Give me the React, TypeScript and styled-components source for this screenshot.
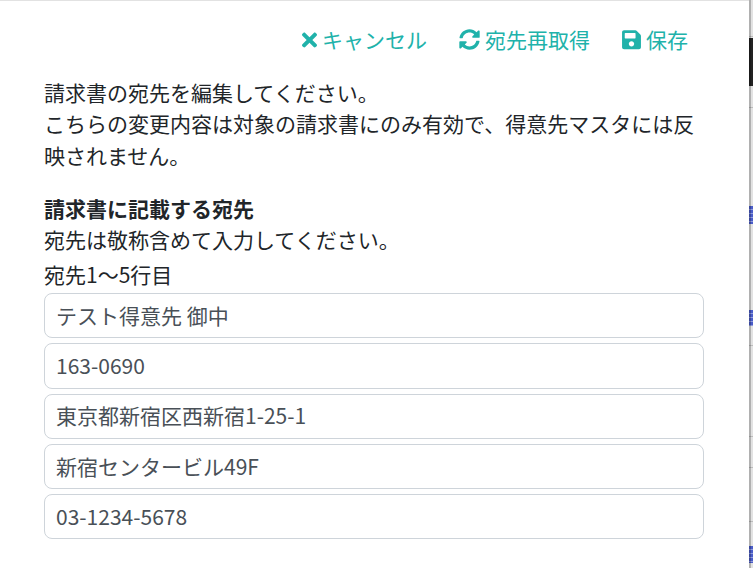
import React from "react";
import styled, { createGlobalStyle } from "styled-components";
import { FaTimes, FaSyncAlt, FaSave } from "react-icons/fa";

const Global = createGlobalStyle`
  html, body { margin: 0; padding: 0; background: #e2e2e2; }
  body { width: 753px; height: 568px; overflow: hidden; font-family: "Noto Sans CJK JP", "Noto Sans", sans-serif; }
`;
const Screen = styled.div`
  display: flex;
  width: 753px;
  height: 568px;
  overflow: hidden;
`;
const Dialog = styled.main`
  width: 749px;
  flex: none;
  background: #fff;
  margin-top: 1px;
  padding: 21px 45px 0 44px;
  box-sizing: border-box;
  color: #212529;
  font-size: 21px;
  line-height: 31.3px;
`;
const Side = styled.aside`
  position: relative;
  width: 4px;
  flex: none;
  display: flex;
  flex-direction: column;
  overflow: hidden;
  &::after {
    content: "";
    position: absolute;
    inset: 0 2px 0 0;
    background: rgba(0, 0, 0, 0.22);
  }
`;
const Gap = styled.div<{ $h: number }>`
  height: ${(p) => p.$h}px;
  flex: none;
`;
const Rule = styled.div`
  height: 1px;
  flex: none;
  background: #bdbdbd;
`;
const DarkBand = styled.div`
  height: 48px;
  flex: none;
  background: #222;
`;
const LinkMark = styled.div<{ $h: number }>`
  height: ${(p) => p.$h}px;
  flex: none;
  background: repeating-linear-gradient(180deg, #4a5cc8 0 3px, #8f9ade 3px 4px);
`;
const Toolbar = styled.div`
  display: flex;
  justify-content: flex-end;
  gap: 32px;
  padding-right: 16px;
  height: 36px;
  align-items: center;
`;
const Action = styled.button`
  display: inline-flex;
  align-items: center;
  gap: 5px;
  border: 0;
  background: none;
  padding: 0;
  font: inherit;
  color: #20b2aa;
  svg { flex: none; }
`;
const CancelIcon = styled(FaTimes)`
  width: 15px;
  height: 22px;
`;
const RefreshIcon = styled(FaSyncAlt)`
  width: 21px;
  height: 21px;
`;
const SaveIcon = styled(FaSave)`
  width: 19px;
  height: 21.6px;
`;
const Paragraph = styled.p`
  margin: 19px 0 0;
`;
const Heading = styled.h2`
  margin: 22px 0 0;
  font-size: inherit;
  font-weight: 700;
  line-height: inherit;
`;
const Note = styled.p`
  margin: 0;
`;
const Label = styled.label`
  display: block;
  margin: 4px 0 2.4px;
`;
const Fields = styled.div`
  display: flex;
  flex-direction: column;
  gap: 5px;
`;
const Field = styled.div`
  height: 45.2px;
  box-sizing: border-box;
  border: 1px solid #ced4da;
  border-radius: 8px;
  padding: 0 11px;
  display: flex;
  align-items: center;
  color: #495057;
`;

const rows = ["テスト得意先 御中", "163-0690", "東京都新宿区西新宿1-25-1", "新宿センタービル49F", "03-1234-5678"];

export default function App() {
  return (
    <Screen>
      <Global />
      <Dialog>
        <Toolbar>
          <Action><CancelIcon />キャンセル</Action>
          <Action><RefreshIcon />宛先再取得</Action>
          <Action><SaveIcon />保存</Action>
        </Toolbar>
        <Paragraph>
          請求書の宛先を編集してください。<br />
          こちらの変更内容は対象の請求書にのみ有効で、得意先マスタには反映されません。
        </Paragraph>
        <Heading>請求書に記載する宛先</Heading>
        <Note>宛先は敬称含めて入力してください。</Note>
        <Label>宛先1〜5行目</Label>
        <Fields>
          {rows.map((r) => <Field key={r}>{r}</Field>)}
        </Fields>
      </Dialog>
      <Side>
        <Gap $h={36} />
        <Rule />
        <Gap $h={1} />
        <DarkBand />
        <Gap $h={21} />
        <Rule />
        <Gap $h={98} />
        <LinkMark $h={18} />
        <Gap $h={86} />
        <LinkMark $h={16} />
        <Gap $h={19} />
        <Rule />
        <Gap $h={90} />
        <Rule />
        <Gap $h={30} />
        <Rule />
        <Gap $h={53} />
        <Rule />
        <Gap $h={24} />
        <LinkMark $h={17} />
      </Side>
    </Screen>
  );
}
